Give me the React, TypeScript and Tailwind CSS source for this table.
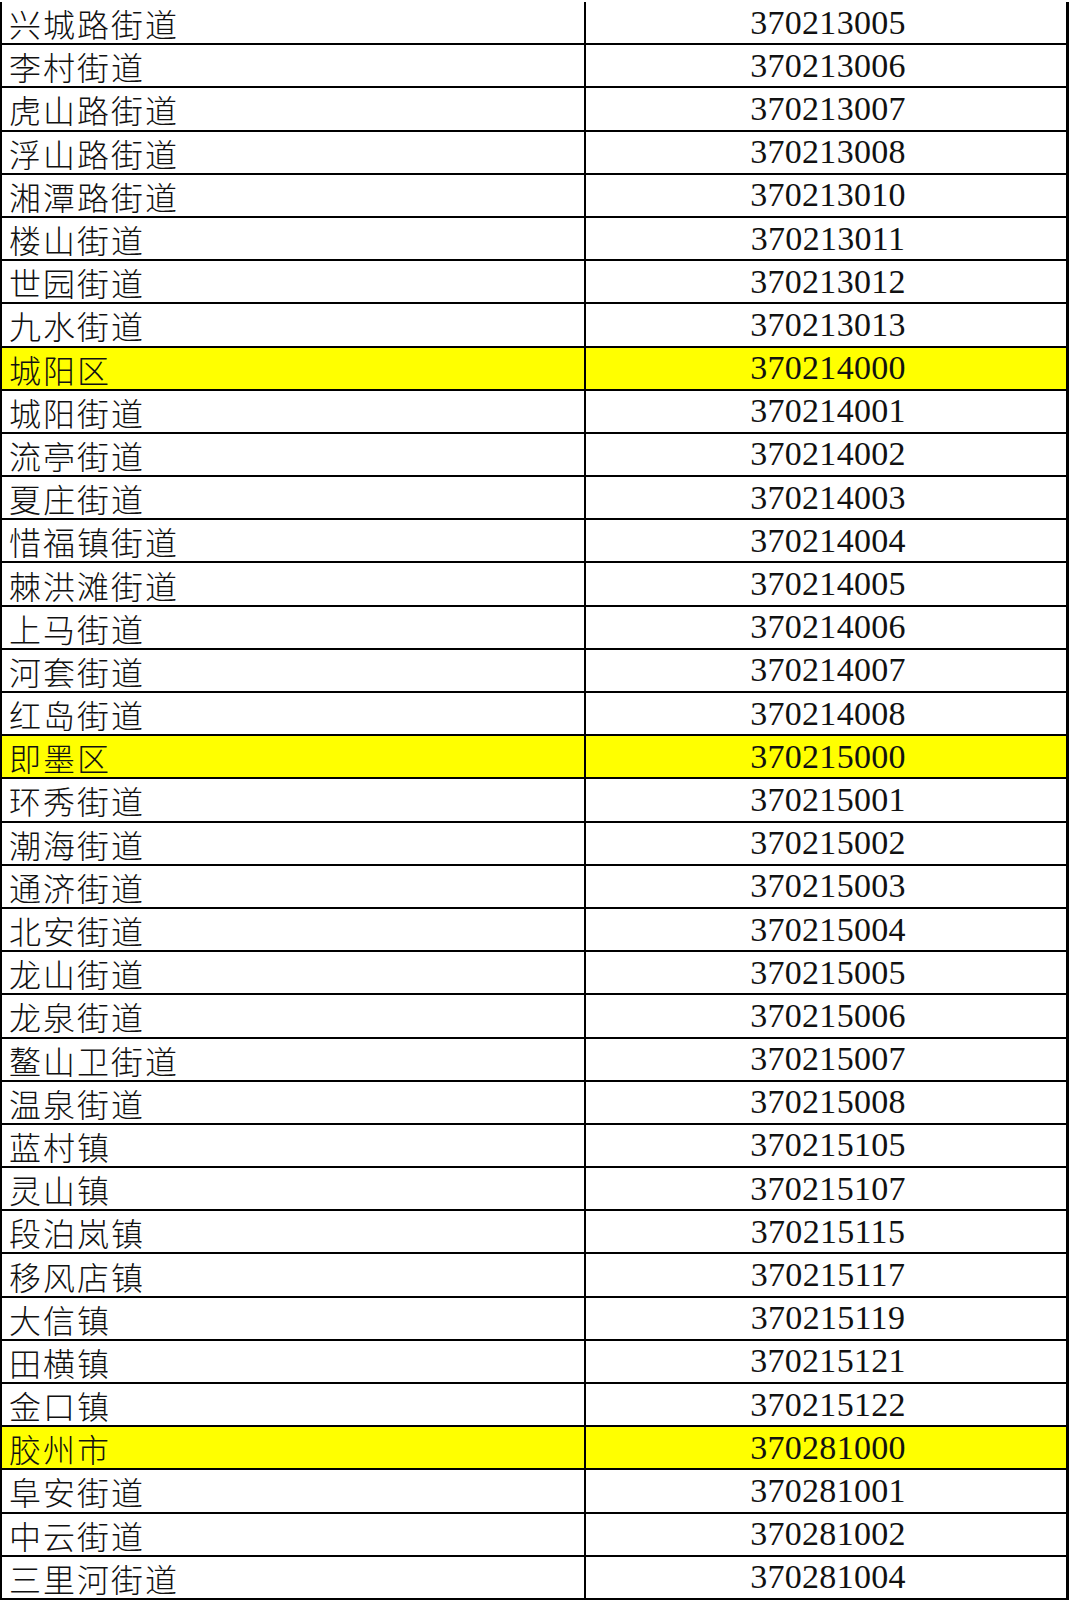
import React from "react";

type Row = {
  name: string;
  code: string;
  highlight?: boolean;
};

const rows: Row[] = [
  { name: "兴城路街道", code: "370213005" },
  { name: "李村街道", code: "370213006" },
  { name: "虎山路街道", code: "370213007" },
  { name: "浮山路街道", code: "370213008" },
  { name: "湘潭路街道", code: "370213010" },
  { name: "楼山街道", code: "370213011" },
  { name: "世园街道", code: "370213012" },
  { name: "九水街道", code: "370213013" },
  { name: "城阳区", code: "370214000", highlight: true },
  { name: "城阳街道", code: "370214001" },
  { name: "流亭街道", code: "370214002" },
  { name: "夏庄街道", code: "370214003" },
  { name: "惜福镇街道", code: "370214004" },
  { name: "棘洪滩街道", code: "370214005" },
  { name: "上马街道", code: "370214006" },
  { name: "河套街道", code: "370214007" },
  { name: "红岛街道", code: "370214008" },
  { name: "即墨区", code: "370215000", highlight: true },
  { name: "环秀街道", code: "370215001" },
  { name: "潮海街道", code: "370215002" },
  { name: "通济街道", code: "370215003" },
  { name: "北安街道", code: "370215004" },
  { name: "龙山街道", code: "370215005" },
  { name: "龙泉街道", code: "370215006" },
  { name: "鳌山卫街道", code: "370215007" },
  { name: "温泉街道", code: "370215008" },
  { name: "蓝村镇", code: "370215105" },
  { name: "灵山镇", code: "370215107" },
  { name: "段泊岚镇", code: "370215115" },
  { name: "移风店镇", code: "370215117" },
  { name: "大信镇", code: "370215119" },
  { name: "田横镇", code: "370215121" },
  { name: "金口镇", code: "370215122" },
  { name: "胶州市", code: "370281000", highlight: true },
  { name: "阜安街道", code: "370281001" },
  { name: "中云街道", code: "370281002" },
  { name: "三里河街道", code: "370281004" },
];

const TableRow = ({ row }: { row: Row }) => {
  return (
    <div
      className={`grid h-[43.2px] grid-cols-[584px_1fr] border-b-2 border-black ${
        row.highlight ? "bg-[#ffff00]" : "bg-white"
      }`}
    >
      <div className="flex items-center border-r-2 border-black pl-[7px] pt-[1px] font-['Noto_Sans_CJK_SC',sans-serif] text-[32px] font-light leading-[40px] tracking-[2px] text-[#111]">
        {row.name}
      </div>
      <div className="flex items-center justify-center pl-[4px] font-['Liberation_Serif',serif] text-[34px] leading-[40px] tracking-[0.3px] text-[#111]">
        {row.code}
      </div>
    </div>
  );
};

export default function App() {
  return (
    <div className="h-[1600px] w-[1069px] overflow-hidden bg-white pt-[2px]">
      <div className="border-l-2 border-r-[3px] border-black">
        {rows.map(row => (
          <TableRow key={row.code} row={row} />
        ))}
      </div>
    </div>
  );
}
